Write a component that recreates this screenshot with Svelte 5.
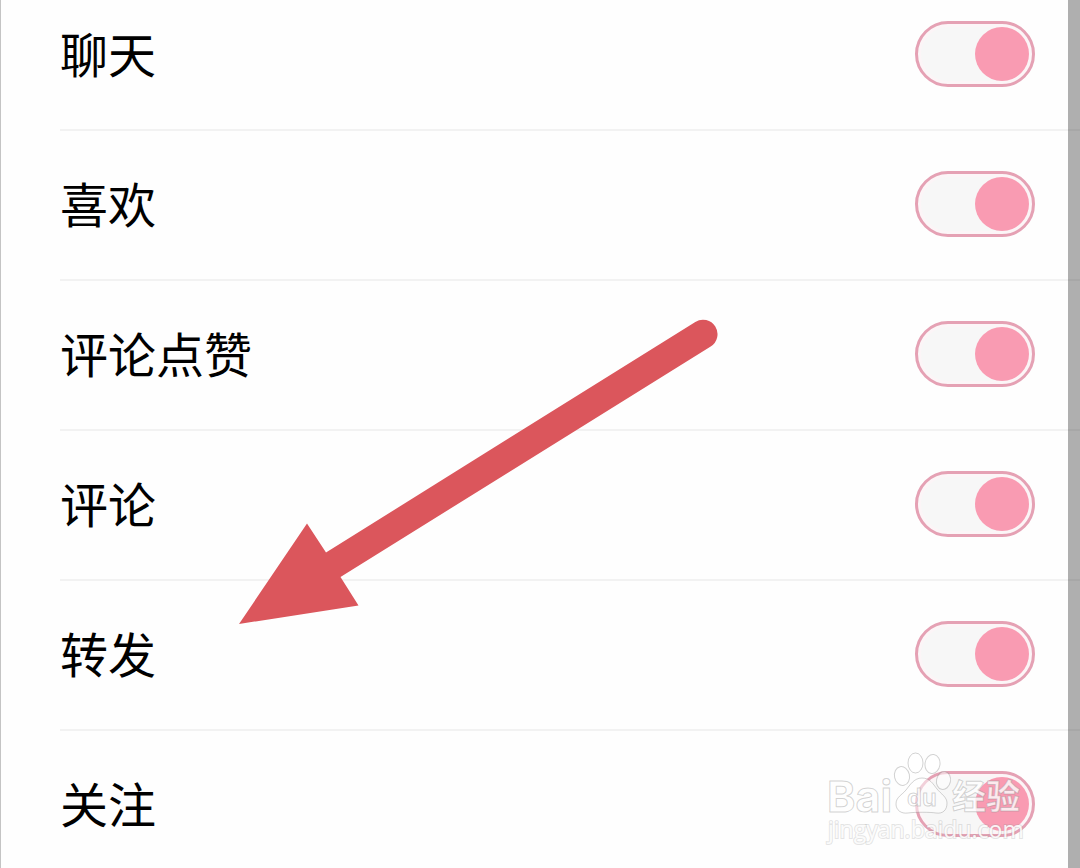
<script>
  let items = $state([
    { id: 'chat', label: '聊天', on: true },
    { id: 'like', label: '喜欢', on: true },
    { id: 'comment-like', label: '评论点赞', on: true },
    { id: 'comment', label: '评论', on: true },
    { id: 'repost', label: '转发', on: true },
    { id: 'follow', label: '关注', on: true }
  ]);
</script>

<main class="screen">
  <ul class="list">
    {#each items as item (item.id)}
      <li class="row">
        <label class="name" for={item.id}>{item.label}</label>
        <input class="switch" type="checkbox" id={item.id} bind:checked={item.on} />
      </li>
    {/each}
  </ul>
  <div class="edge"></div>

  <svg class="arrow" width="480" height="306" viewBox="238 319 480 306" aria-hidden="true">
    <path
      d="M239 624 L307 523.5 L326 552.5 L695.3 321.9 A14.5 14.5 0 0 1 710.7 346.5 L340.5 577 L358.5 605.5 Z"
      fill="#db565c"
    />
  </svg>

  <svg class="watermark" width="210" height="104" viewBox="820 745 210 104">
    <g class="mark">
      <text class="latin" x="827" y="812">Bai</text>
      <ellipse class="paw" cx="902" cy="776" rx="7.5" ry="9.5" transform="rotate(-12 902 776)" />
      <ellipse class="paw" cx="915.5" cy="763" rx="7.5" ry="10" />
      <ellipse class="paw" cx="932.5" cy="764" rx="7.5" ry="9.5" transform="rotate(8 932.5 764)" />
      <ellipse class="paw" cx="943.5" cy="780.5" rx="7" ry="9" transform="rotate(12 943.5 780.5)" />
      <path
        class="paw"
        d="M922 778 C914 778 910 785 906 790 C902 795 896 797 896 804 C896 810 901 814 908 813 C915 812 930 812 936 813 C943 814 947 810 947 803 C947 797 941 794 937 789 C933 784 930 778 922 778 Z"
      />
      <text class="du" x="907" y="806">du</text>
      <text class="han" x="952" y="809">经验</text>
    </g>
    <text class="url" x="828" y="838">jingyan.baidu.com</text>
  </svg>
</main>

<style>
  :global(body) {
    margin: 0;
    background: #fefefe;
  }

  .screen {
    position: relative;
    display: flex;
    height: 100vh;
    overflow: hidden;
    box-sizing: border-box;
    border-left: 1px solid #c4c4c4;
    background: #fefefe;
    font-family: 'Noto Sans CJK SC', sans-serif;
  }

  /* The list is scrolled a little past its first row. */
  .list {
    flex: 1;
    margin: -19px 0 0;
    padding: 0 0 0 59px;
    list-style: none;
  }

  .row {
    display: flex;
    align-items: center;
    justify-content: space-between;
    height: 150px;
    box-sizing: border-box;
    padding: 0 45px 2px 0;
    border-bottom: 2px solid #f2f2f2;
  }

  .name {
    padding-bottom: 4px;
    font-size: 48px;
    line-height: 72px;
    color: #000;
  }

  .switch {
    appearance: none;
    display: flex;
    align-items: center;
    flex: none;
    width: 120px;
    height: 66px;
    margin: 0;
    padding: 0 3px;
    box-sizing: border-box;
    border: 3px solid #e5a1b4;
    border-radius: 33px;
    background: #f7f7f7;
    box-shadow: inset 0 0 0 3px #fcf5f7;
  }

  .switch::before {
    content: '';
    width: 54px;
    height: 54px;
    border-radius: 50%;
    background: #f99bb2;
  }

  .switch:checked {
    justify-content: flex-end;
  }

  /* Translucent strip over the right end of the rows. */
  .edge {
    flex: none;
    width: 12px;
    margin-left: -12px;
    z-index: 1;
    background: rgba(0, 0, 0, 0.31);
  }

  .arrow {
    position: absolute;
    left: 237px;
    top: 319px;
  }

  .watermark {
    position: absolute;
    right: 50px;
    top: 745px;
    pointer-events: none;
  }

  .mark {
    fill: rgba(255, 255, 255, 0.8);
    stroke: rgba(130, 130, 130, 0.35);
    stroke-width: 1px;
  }

  .paw {
    fill: rgba(255, 255, 255, 0.5);
  }

  .latin {
    font: 700 43px Inter, sans-serif;
  }

  .du {
    font: 600 24px Inter, sans-serif;
  }

  .han {
    font: 700 34px 'Noto Sans CJK SC', sans-serif;
  }

  .url {
    font: 400 23px 'Open Sans', sans-serif;
    fill: rgba(255, 255, 255, 0.9);
    stroke: rgba(150, 150, 150, 0.25);
    stroke-width: 2px;
    paint-order: stroke;
  }
</style>
